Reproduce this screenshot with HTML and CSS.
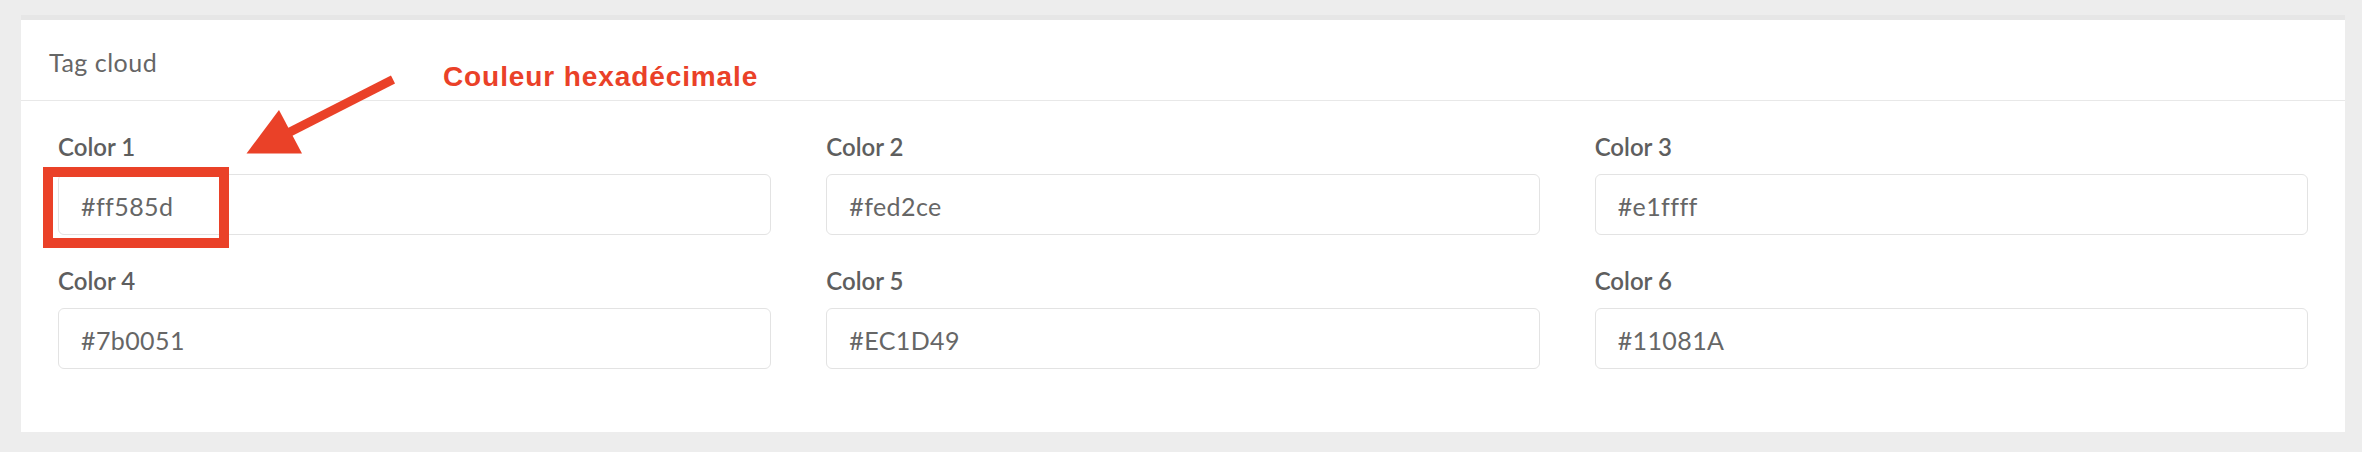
FILE: index.html
```html
<!DOCTYPE html>
<html lang="fr">
<head>
    <meta charset="UTF-8">
    <meta name="viewport" content="width=device-width, initial-scale=1.0">
    <title>Tag cloud</title>
    <link rel="stylesheet" href="styles.css">
</head>
<body>
    <div class="panel">
        <div class="panel-header">Tag cloud</div>

        <form class="color-grid">
            <div class="field">
                <label for="color1">Color 1</label>
                <input type="text" id="color1" value="#ff585d">
            </div>
            <div class="field">
                <label for="color2">Color 2</label>
                <input type="text" id="color2" value="#fed2ce">
            </div>
            <div class="field">
                <label for="color3">Color 3</label>
                <input type="text" id="color3" value="#e1ffff">
            </div>
            <div class="field">
                <label for="color4">Color 4</label>
                <input type="text" id="color4" value="#7b0051">
            </div>
            <div class="field">
                <label for="color5">Color 5</label>
                <input type="text" id="color5" value="#EC1D49">
            </div>
            <div class="field">
                <label for="color6">Color 6</label>
                <input type="text" id="color6" value="#11081A">
            </div>
        </form>
    </div>

    <!-- annotation drawn over the form -->
    <div class="note">
        <span class="note-text">Couleur hexadécimale</span>
        <svg class="note-arrow" width="420" height="260" viewBox="0 0 420 260">
            <line x1="393" y1="79.5" x2="286" y2="134" stroke="#ea4128" stroke-width="9"/>
            <polygon points="279,110 302,153.5 246.5,153.5" fill="#ea4128"/>
            <rect x="48" y="172" width="176" height="71" fill="none" stroke="#ea4128" stroke-width="10"/>
        </svg>
    </div>
</body>
</html>
```

FILE: styles.css
```css
* {
    margin: 0;
    padding: 0;
    box-sizing: border-box;
}

body {
    font-family: 'Lato', 'Open Sans', sans-serif;
    background: #ededed;
    padding: 15px 17px 20px 21px;
    position: relative;
}

.panel {
    background: white;
    border-top: 5px solid #e6e6e6;
}

.panel-header {
    height: 81px;
    padding: 30px 28px 0;
    border-bottom: 1px solid #e8e8e8;
    font-size: 25px;
    line-height: 25px;
    letter-spacing: 0.5px;
    color: #666;
}

.color-grid {
    display: grid;
    grid-template-columns: repeat(3, 1fr);
    column-gap: 55px;
    row-gap: 34px;
    padding: 34px 37px 63px;
}

.field label {
    display: block;
    font-size: 24px;
    line-height: 24px;
    font-weight: 600;
    color: #5e5e5e;
    margin-bottom: 15px;
}

.field input[type="text"] {
    display: block;
    width: 100%;
    height: 61px;
    padding: 2px 22px 0;
    border: 1px solid #e3e3e3;
    border-radius: 6px;
    font-family: inherit;
    font-size: 25px;
    letter-spacing: 0.4px;
    color: #666;
    background: white;
}

.field input[type="text"]:focus {
    outline: none;
    border-color: #ccc;
}

.note {
    position: absolute;
    top: 0;
    left: 0;
    width: 800px;
    height: 260px;
    pointer-events: none;
}

.note-arrow {
    position: absolute;
    top: 0;
    left: 0;
}

.note-text {
    position: absolute;
    top: 63px;
    left: 443px;
    font-family: 'Liberation Sans', Arial, sans-serif;
    font-weight: bold;
    font-size: 28px;
    line-height: 28px;
    letter-spacing: 0.9px;
    color: #ea4128;
    white-space: nowrap;
}
```
